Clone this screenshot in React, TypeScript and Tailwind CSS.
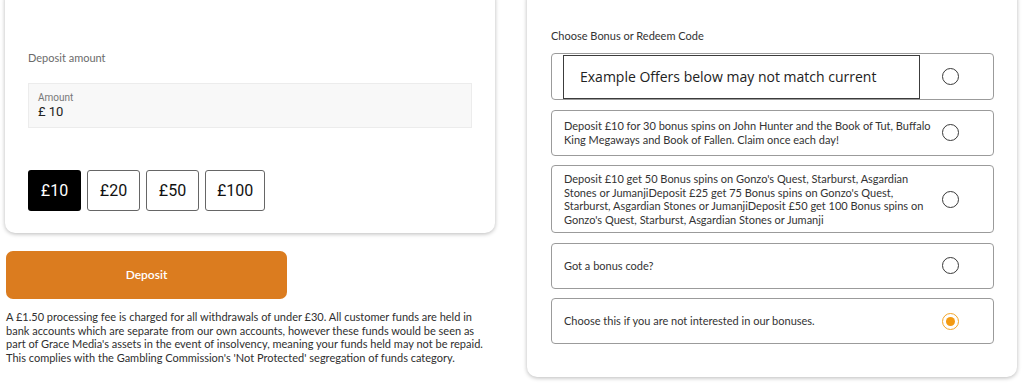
import { useState } from "react";

const amounts = ["£10", "£20", "£50", "£100"];

const offers: { id: string; lines: string[] }[] = [
    {
        id: "daily",
        lines: [
            "Deposit £10 for 30 bonus spins on John Hunter and the Book of Tut, Buffalo",
            "King Megaways and Book of Fallen. Claim once each day!",
        ],
    },
    {
        id: "tiers",
        lines: [
            "Deposit £10 get 50 Bonus spins on Gonzo's Quest, Starburst, Asgardian",
            "Stones or JumanjiDeposit £25 get 75 Bonus spins on Gonzo's Quest,",
            "Starburst, Asgardian Stones or JumanjiDeposit £50 get 100 Bonus spins on",
            "Gonzo's Quest, Starburst, Asgardian Stones or Jumanji",
        ],
    },
    { id: "code", lines: ["Got a bonus code?"] },
    { id: "none", lines: ["Choose this if you are not interested in our bonuses."] },
];

function Radio({ checked }: { checked: boolean }) {
    return checked ? (
        <span className="flex h-[17px] w-[17px] shrink-0 items-center justify-center rounded-full border-[1.5px] border-[#f3a62a]">
            <span className="block h-[9px] w-[9px] rounded-full bg-[#f39a12]" />
        </span>
    ) : (
        <span className="block h-[17px] w-[17px] shrink-0 rounded-full border-[1.3px] border-[#3a3a3a]" />
    );
}

export default function App() {
    const [amount, setAmount] = useState("£10");
    const [bonus, setBonus] = useState("none");

    return (
        <div className="flex h-[384px] w-[1024px] overflow-hidden bg-white font-['Lato','Open_Sans',sans-serif] text-[#333]">
            {/* Left: deposit */}
            <div className="ml-[5px] flex w-[490px] flex-col">
                <div className="mt-[-12px] rounded-[10px] bg-white px-[23px] pb-[22px] pt-[63px] shadow-[0_1px_4px_rgba(0,0,0,0.28)]">
                    <div className="text-[11px] leading-[14px] text-[#6b6b6b]">Deposit amount</div>
                    <div className="mt-[18px] flex h-[45px] flex-col justify-center border border-[#ececec] bg-[#f8f8f8] px-[9px] font-['Roboto',sans-serif]">
                        <span className="text-[10px] leading-[13px] text-[#777]">Amount</span>
                        <span className="text-[13px] leading-[16px] text-[#222]">£ 10</span>
                    </div>
                    <div className="mt-[42px] flex gap-[6px] font-['Roboto',sans-serif] text-[16px]">
                        {amounts.map((a) => (
                            <button
                                key={a}
                                onClick={() => setAmount(a)}
                                className={
                                    amount === a
                                        ? "h-[41px] min-w-[53px] rounded-[3px] bg-black px-[11px] text-white"
                                        : "h-[41px] min-w-[53px] rounded-[3px] border border-[#666] bg-white px-[11px] text-[#111]"
                                }
                            >
                                {a}
                            </button>
                        ))}
                    </div>
                </div>

                <button className="ml-[1px] mt-[18px] h-[48px] w-[281px] shrink-0 rounded-[7px] bg-[#db7c1f] text-[12px] font-semibold text-white">
                    Deposit
                </button>

                <p className="ml-[1px] mt-[11px] w-[486px] text-[11px] leading-[13.5px] text-[#2f2f2f]">
                    A £1.50 processing fee is charged for all withdrawals of under £30. All customer funds are held in
                    bank accounts which are separate from our own accounts, however these funds would be seen as part of
                    Grace Media's assets in the event of insolvency, meaning your funds held may not be repaid. This
                    complies with the Gambling Commission's 'Not Protected' segregation of funds category.
                </p>
            </div>

            {/* Right: bonus */}
            <div className="ml-[32px] w-[490px]">
                <div className="mt-[-12px] rounded-[10px] bg-white pb-[33px] pl-[24px] pr-[23px] pt-[41px] shadow-[0_1px_4px_rgba(0,0,0,0.28)]">
                    <div className="text-[11px] leading-[14px] text-[#333]">Choose Bonus or Redeem Code</div>

                    <div className="mt-[10px] flex flex-col gap-[9.5px]">
                        {/* Notice row */}
                        <div className="flex h-[47px] items-center rounded-[4px] border border-[#9b9b9b] pl-[11px] pr-[34px]">
                            <div className="flex h-[44px] w-[357px] items-center border-[1.5px] border-[#3c3c3c] pl-[16px] font-['Open_Sans',sans-serif] text-[14px] text-[#222]">
                                Example Offers below may not match current
                            </div>
                            <span className="ml-auto">
                                <Radio checked={false} />
                            </span>
                        </div>

                        {offers.map((o) => (
                            <div
                                key={o.id}
                                onClick={() => setBonus(o.id)}
                                className="flex min-h-[46px] items-center rounded-[4px] border border-[#9b9b9b] py-[6px] pl-[12px] pr-[34px]"
                            >
                                <div className="text-[11px] leading-[13.5px] text-[#333]">
                                    {o.lines.map((l, i) => (
                                        <div key={i} className="whitespace-nowrap">{l}</div>
                                    ))}
                                </div>
                                <span className="ml-auto">
                                    <Radio checked={bonus === o.id} />
                                </span>
                            </div>
                        ))}
                    </div>
                </div>
            </div>
        </div>
    );
}
